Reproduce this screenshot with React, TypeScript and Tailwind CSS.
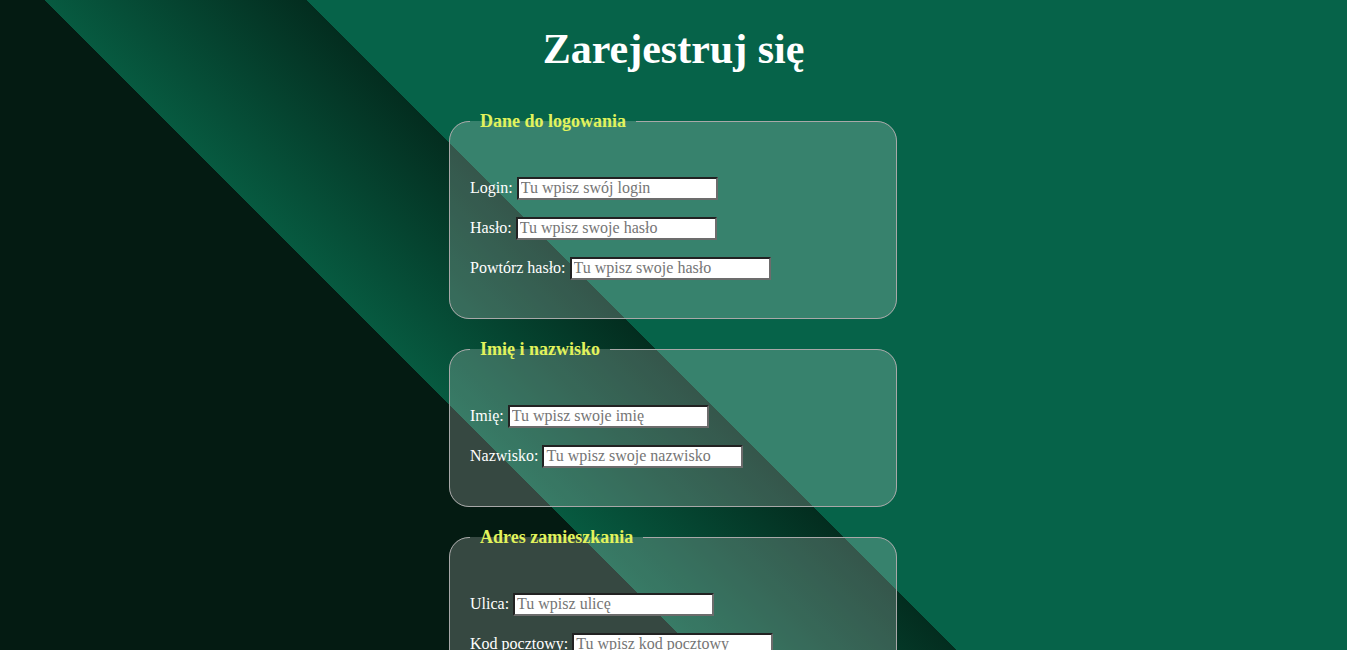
import React from "react";

const inputCls =
  "box-border w-[201px] h-[23px] bg-white border-2 border-t-[#222222] border-l-[#222222] border-r-[#6c6c6c] border-b-[#6c6c6c] px-[2px] py-px text-[16px] text-black placeholder:text-[#757575] outline-none [font-family:'Liberation_Serif',serif]";

function Row({ label, placeholder }: { label: string; placeholder: string }) {
  return (
    <div className="flex items-baseline">
      <label className="text-white text-[16px] mr-[4px]">{label}</label>
      <input className={inputCls} placeholder={placeholder} type="text" />
    </div>
  );
}

function Group({ title, rows }: { title: string; rows: [string, string][] }) {
  return (
    <fieldset className="w-[448px] mx-auto border border-[#a8a8a8] rounded-[20px] bg-[rgba(255,255,255,0.2)] px-[20px] pt-[45px] pb-[38px]">
      <legend className="px-[10px] text-[18px] font-bold text-[#e2f35c] leading-[20px]">
        {title}
      </legend>
      <div className="flex flex-col gap-[16px]">
        {rows.map(([l, p]) => (
          <Row key={l} label={l} placeholder={p} />
        ))}
      </div>
    </fieldset>
  );
}

export default function App() {
  return (
    <div className="min-h-screen w-full bg-[#041c12] bg-no-repeat bg-[length:1347px_650px] bg-[linear-gradient(45deg,#041b12_34.8%,#075a40_34.8%,#032d1f_47.9%,#066349_47.9%)] [font-family:'Liberation_Serif',serif] pb-[40px]">
      <h1 className="text-center text-white font-bold text-[42px] leading-[48px] pt-[25px] mb-[38px]">
        Zarejestruj się
      </h1>
      <div className="flex flex-col gap-[20px] pr-px">
        <Group
          title="Dane do logowania"
          rows={[
            ["Login:", "Tu wpisz swój login"],
            ["Hasło:", "Tu wpisz swoje hasło"],
            ["Powtórz hasło:", "Tu wpisz swoje hasło"],
          ]}
        />
        <Group
          title="Imię i nazwisko"
          rows={[
            ["Imię:", "Tu wpisz swoje imię"],
            ["Nazwisko:", "Tu wpisz swoje nazwisko"],
          ]}
        />
        <Group
          title="Adres zamieszkania"
          rows={[
            ["Ulica:", "Tu wpisz ulicę"],
            ["Kod pocztowy:", "Tu wpisz kod pocztowy"],
            ["Miasto:", "Tu wpisz miasto"],
          ]}
        />
      </div>
    </div>
  );
}
